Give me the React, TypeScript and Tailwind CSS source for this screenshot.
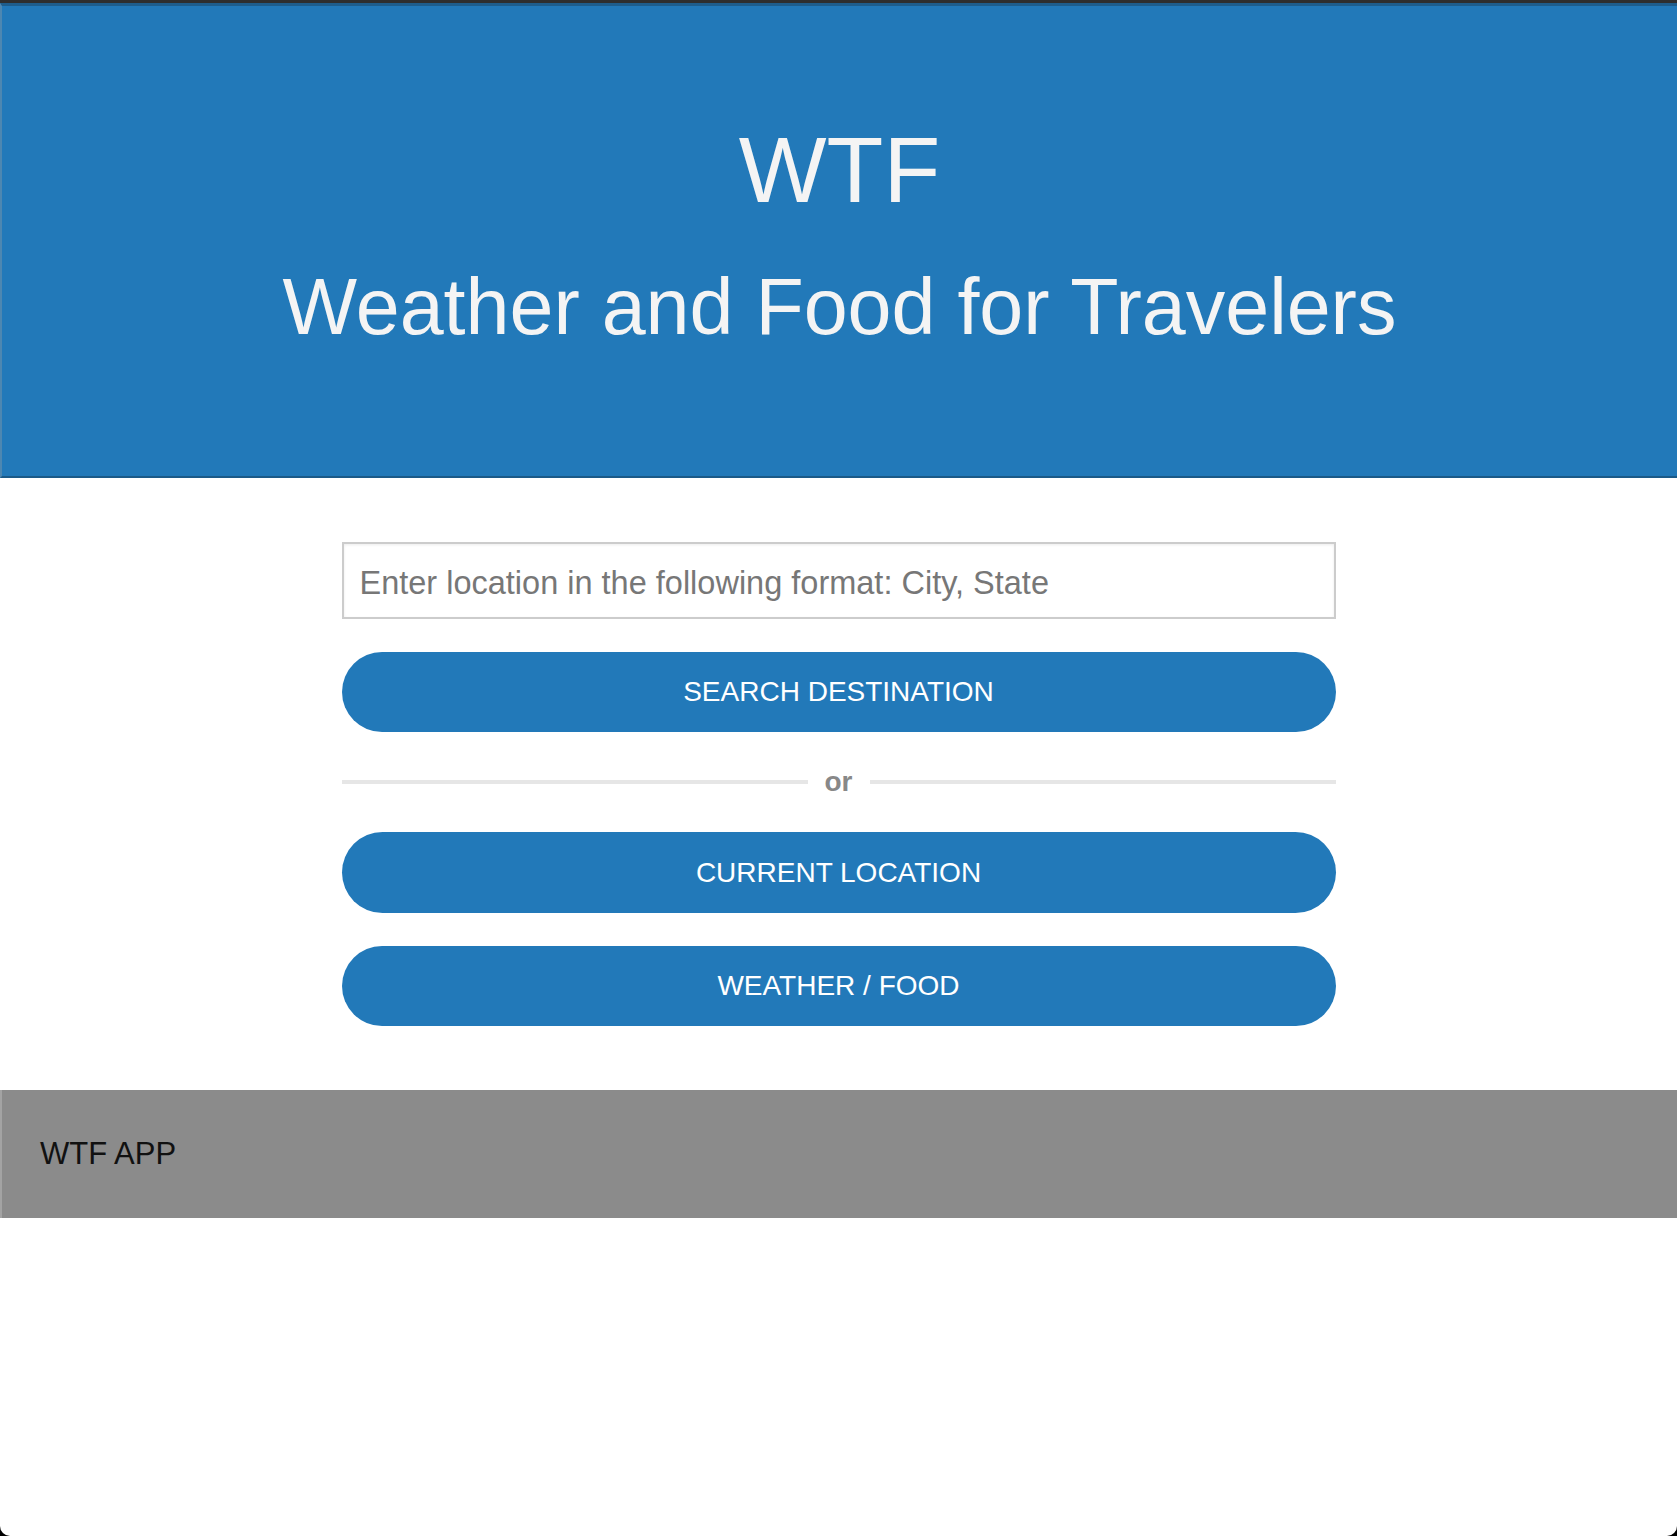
import React from "react";

export default function App() {
  return (
    <div className="min-h-[1536px] bg-black font-['Liberation_Sans',Arial,sans-serif]">
      <div className="flex min-h-[1536px] flex-col rounded-b-[10px] bg-white">
        <div className="h-[3px] bg-[#2e2e2e]" />
        <header className="flex flex-col items-center border-t-[3px] border-b-2 border-l-2 border-t-[#1e5d8c] border-b-[#1b5a88] border-l-[#4d87b1] bg-[#2279b9] pt-[117px] pb-[129px] text-[#f4f4f4]">
          <h1 className="text-[93px] leading-[95px] font-normal">WTF</h1>
          <h2 className="mt-[49px] text-[79px] leading-[80px] font-normal">Weather and Food for Travelers</h2>
        </header>
        <main className="mx-auto flex w-[994px] flex-col pt-16 pb-16">
          <input
            type="text"
            placeholder="Enter location in the following format: City, State"
            className="h-[77px] w-full border-2 border-[#cccccc] bg-white pt-[6px] pl-4 text-[32.5px] text-[#333] shadow-[inset_0_1px_3px_rgba(0,0,0,0.08)] outline-none placeholder:text-[#777777]"
          />
          <button className="mt-[33px] h-[80px] w-full rounded-full bg-[#2279b9] text-[28px] text-white">
            SEARCH DESTINATION
          </button>
          <div className="mt-[40px] flex h-[20px] items-center gap-[17px]">
            <div className="h-[4px] flex-1 bg-[#e6e6e6]" />
            <span className="text-[28px] leading-none font-bold text-[#888888]">or</span>
            <div className="h-[4px] flex-1 bg-[#e6e6e6]" />
          </div>
          <button className="mt-[40px] h-[81px] w-full rounded-full bg-[#2279b9] text-[28px] text-white">
            CURRENT LOCATION
          </button>
          <button className="mt-[33px] h-[80px] w-full rounded-full bg-[#2279b9] text-[28px] text-white">
            WEATHER / FOOD
          </button>
        </main>
        <footer className="flex h-[128px] items-center border-l-2 border-l-[#a3a3a3] bg-[#8b8b8b] pl-[38px]">
          <span className="text-[31px] text-[#111111]">WTF APP</span>
        </footer>
      </div>
    </div>
  );
}
